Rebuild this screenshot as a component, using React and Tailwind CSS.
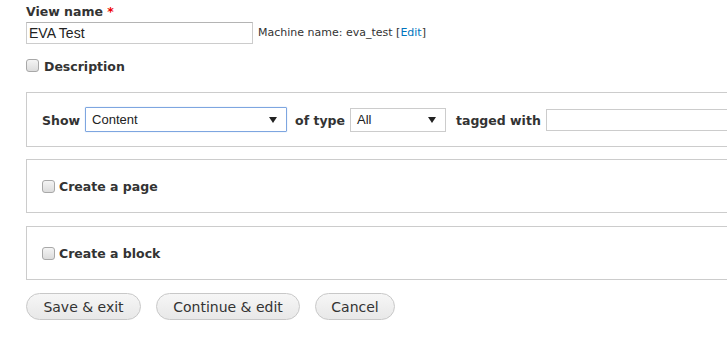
import React from "react";

function Check() {
  return (
    <span className="inline-block w-[13px] h-[13px] rounded-[3px] border border-[#a8a8a8] bg-gradient-to-b from-[#f4f4f4] to-[#dcdcdc] shrink-0" />
  );
}

function Arrow() {
  return (
    <svg width="8" height="6" viewBox="0 0 8 6"><path d="M0 0H8L4 6Z" fill="#222" /></svg>
  );
}

const bold = "text-[12.5px] font-bold font-['DejaVu_Sans',Verdana,sans-serif] pt-[3px]";

export default function App() {
  return (
    <div className="w-[727px] h-[341px] overflow-hidden bg-white text-[#333]">
      <div className="pl-[26px] pt-[4px] flex flex-col">
        <div className="text-[12.5px] font-bold leading-[16px] font-['DejaVu_Sans',Verdana,sans-serif] text-[#333]">
          View name <span className="text-[#e00]">*</span>
        </div>
        <div className="flex items-center mt-[2px]">
          <div className="w-[227px] h-[22px] border border-[#ccc] border-t-[#b4b4b4] flex items-center px-[2px] text-[14px] text-[#222] font-['Liberation_Sans',Arial,sans-serif]">
            EVA Test
          </div>
          <div className="ml-[5px] text-[11px] font-['DejaVu_Sans',Verdana,sans-serif] text-[#333] mt-[1px]">
            Machine name: eva_test [<span className="text-[#0074bd]">Edit</span>]
          </div>
        </div>
        <div className="flex items-center mt-[15px] h-[13px]">
          <Check />
          <span className={`ml-[5px] ${bold}`}>Description</span>
        </div>

        <div className="mt-[20px] w-[760px] h-[55px] border border-[#ccc] flex items-center pl-[15px]">
          <span className={bold}>Show</span>
          <div className="ml-[5px] w-[202px] h-[25px] border border-[#7ea6e0] rounded-[1px] shadow-[0_0_1px_#8fb3e8] flex items-center justify-between pl-[6px] pr-[9px] pt-[1px] text-[13px] text-[#222] font-['Liberation_Sans',Arial,sans-serif]">
            <span>Content</span>
            <Arrow />
          </div>
          <span className={`ml-[8px] ${bold}`}>of type</span>
          <div className="ml-[5px] w-[96px] h-[24px] border border-[#ccc] flex items-center justify-between pl-[6px] pr-[9px] pt-[1px] text-[13px] text-[#222] font-['Liberation_Sans',Arial,sans-serif]">
            <span>All</span>
            <Arrow />
          </div>
          <span className={`ml-[10px] ${bold}`}>tagged with</span>
          <div className="ml-[5px] w-[200px] h-[22px] border border-[#ccc]" />
        </div>

        <div className="mt-[12px] w-[760px] h-[54px] border border-[#ccc] flex items-center pl-[15px]">
          <Check />
          <span className={`ml-[4px] ${bold}`}>Create a page</span>
        </div>

        <div className="mt-[13px] w-[760px] h-[54px] border border-[#ccc] flex items-center pl-[15px]">
          <Check />
          <span className={`ml-[4px] ${bold}`}>Create a block</span>
        </div>

        <div className="mt-[13px] flex gap-[15px]">
          {[
            ["Save & exit", "w-[115px]"],
            ["Continue & edit", "w-[144px]"],
            ["Cancel", "w-[80px]"],
          ].map(([t, w]) => (
            <div
              key={t}
              className={`${w} h-[27px] rounded-full border border-[#c8c8c8] bg-gradient-to-b from-[#f6f6f6] to-[#e8e8e8] flex items-center justify-center pt-[1px] text-[14px] text-[#333] font-['DejaVu_Sans',Verdana,sans-serif]`}
            >
              {t}
            </div>
          ))}
        </div>
      </div>
    </div>
  );
}
